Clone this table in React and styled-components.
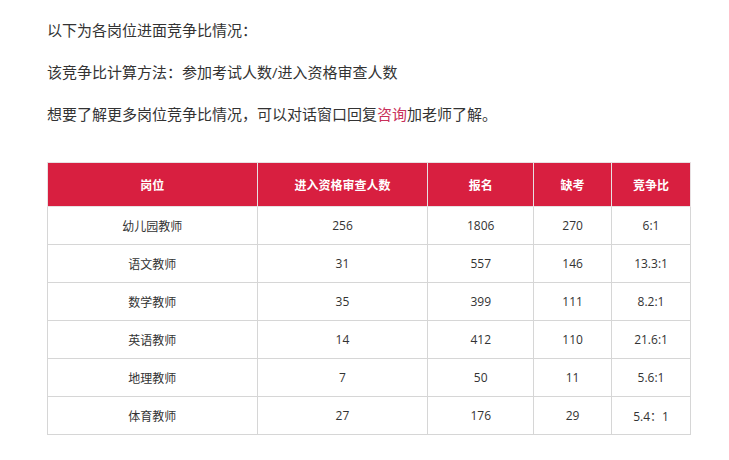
import styled, { createGlobalStyle } from "styled-components";

const GlobalStyle = createGlobalStyle`
  body {
    margin: 0;
    background: #fff;
    font-family: "Open Sans", "Noto Sans CJK SC", sans-serif;
  }
`;

const Page = styled.div`
  padding: 20px 38px 0 47px;
  color: #333;
`;
const Paragraph = styled.p`
  margin: 0 0 21px;
  font-size: 15px;
  line-height: 21px;
  color: #333;
`;
const Highlight = styled.span`
  color: #c9305a;
`;
const Table = styled.table`
  margin-top: 37px;
  border-collapse: collapse;
  table-layout: fixed;
  font-size: 12px;
`;
const HeadCell = styled.th`
  width: ${(props) => props.w}px;
  height: 43px;
  padding: 0;
  background: #d81f40;
  color: #fff;
  font-weight: 700;
  text-align: center;
  border: 1px solid #e8e0e2;
`;
const Cell = styled.td`
  height: 37px;
  padding: 0;
  text-align: center;
  color: #333;
  border: 1px solid #d6d6d6;
`;

const columns = [
  { title: "岗位", w: 209 },
  { title: "进入资格审查人数", w: 170 },
  { title: "报名", w: 105 },
  { title: "缺考", w: 77 },
  { title: "竞争比", w: 78 },
];

const rows = [
  ["幼儿园教师", "256", "1806", "270", "6:1"],
  ["语文教师", "31", "557", "146", "13.3:1"],
  ["数学教师", "35", "399", "111", "8.2:1"],
  ["英语教师", "14", "412", "110", "21.6:1"],
  ["地理教师", "7", "50", "11", "5.6:1"],
  ["体育教师", "27", "176", "29", "5.4：1"],
];

const App = () => {
  return (
    <Page>
      <GlobalStyle />
      <Paragraph>以下为各岗位进面竞争比情况：</Paragraph>
      <Paragraph>该竞争比计算方法：参加考试人数/进入资格审查人数</Paragraph>
      <Paragraph>
        想要了解更多岗位竞争比情况，可以对话窗口回复<Highlight>咨询</Highlight>加老师了解。
      </Paragraph>
      <Table>
        <thead>
          <tr>
            {columns.map((col) => (
              <HeadCell key={col.title} w={col.w}>
                {col.title}
              </HeadCell>
            ))}
          </tr>
        </thead>
        <tbody>
          {rows.map((row, index) => (
            <tr key={index}>
              {row.map((value, i) => (
                <Cell key={i}>{value}</Cell>
              ))}
            </tr>
          ))}
        </tbody>
      </Table>
    </Page>
  );
};
export default App;
